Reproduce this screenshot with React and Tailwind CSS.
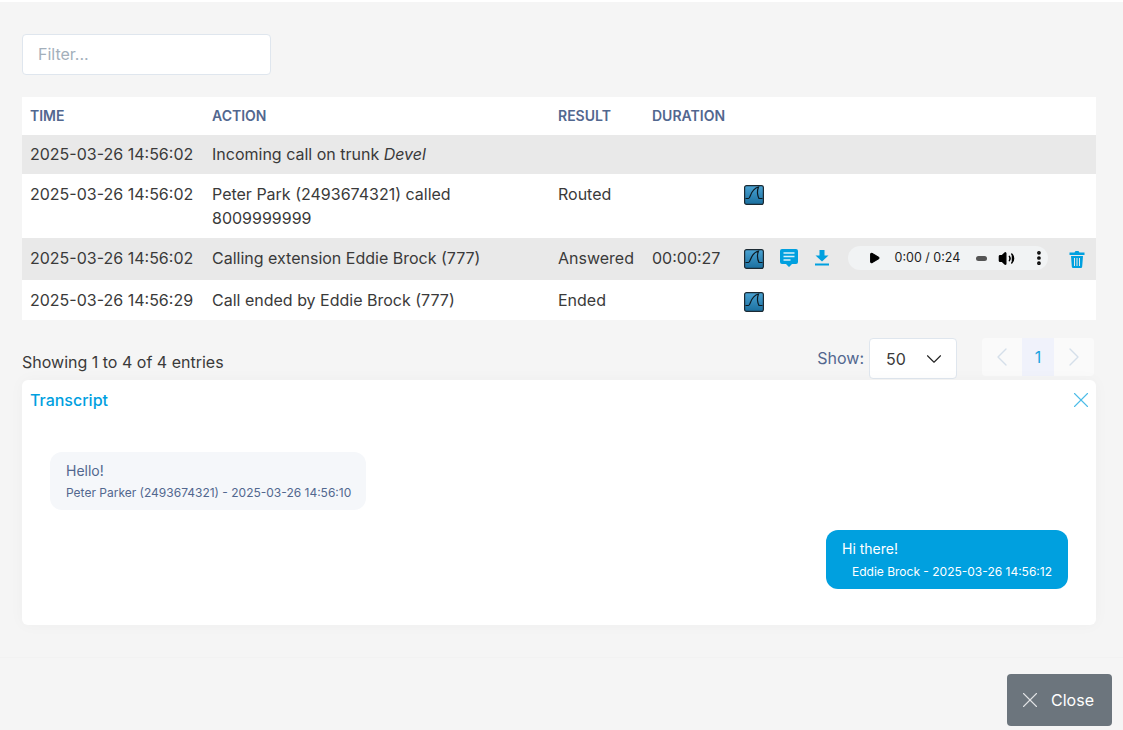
import React from 'react';
import { X, ChevronLeft, ChevronRight, ChevronDown, Play, Volume2, MoreVertical } from 'lucide-react';

const Shark = () => (
  <svg width="20" height="20" viewBox="0 0 20 20" className="block">
    <defs>
      <linearGradient id="sg" x1="0" y1="0" x2="0" y2="1">
        <stop offset="0" stopColor="#4ba3d3" />
        <stop offset="1" stopColor="#1a6f9f" />
      </linearGradient>
    </defs>
    <rect x="0.6" y="0.6" width="18.8" height="18.8" rx="2" fill="url(#sg)" stroke="#1c2a33" strokeWidth="1.200" />
    <path d="M1.500 13.500h3c2.500 0 1.500-9.500 10-11.500 -1.200 3-1.200 8 0.500 11.500h3.500" fill="none" stroke="#0d1a22" strokeWidth="1.200" />
  </svg>
);

const Chat = () => (
  <svg width="18" height="20" viewBox="0 0 18 20" className="block">
    <path d="M2 0h14a2 2 0 0 1 2 2v11a2 2 0 0 1-2 2h-4l-3 3-3-3H2a2 2 0 0 1-2-2V2a2 2 0 0 1 2-2z" fill="#00a0df" />
    <path d="M3.500 4h11M3.500 7.500h11M3.500 11h7" stroke="#d6f0fa" strokeWidth="1.400" />
  </svg>
);

const Download = () => (
  <svg width="16" height="16" viewBox="0 0 16 16" className="block">
    <path d="M5.500 0h5v5.500h4L8 11.500 1.500 5.500h4z" fill="#00a0df" />
    <rect x="1" y="13.500" width="14" height="2" fill="#00a0df" />
  </svg>
);

const Trash = () => (
  <svg width="16" height="18" viewBox="0 0 16 18" className="block">
    <path d="M0.500 2.500h5l1-1.500h3l1 1.500h5V5H0.500z" fill="#00a0df" />
    <path d="M2 6h12l-0.800 10.500a1.500 1.500 0 0 1-1.500 1.500H4.300a1.500 1.500 0 0 1-1.500-1.500z" fill="#00a0df" />
    <path d="M5.500 8v8M8 8v8M10.500 8v8" stroke="#e8e8e8" strokeWidth="1" />
  </svg>
);

const Player = () => (
  <div className="w-[200px] h-6 rounded-full bg-[#f1f3f4] flex items-center text-[12.5px] text-[#1f1f1f]">
    <Play size={14} fill="#000" stroke="#000" className="ml-[20px]" />
    <span className="ml-[14px] whitespace-nowrap">0:00 / 0:24</span>
    <span className="ml-[16px] w-3 h-[5px] rounded-full bg-[#555]" />
    <Volume2 size={19} fill="#000" stroke="#000" className="ml-[11px]" />
    <MoreVertical size={20} stroke="#000" strokeWidth={3} className="ml-[15px]" />
  </div>
);

const Row = ({ time, action, result, duration, gray, h, pt = 'pt-2', children }) => (
  <tr className={`${gray ? 'bg-[#e9e9e9]' : 'bg-white'} ${h}`}>
    <td className={`pl-2 ${pt} align-top`}>{time}</td>
    <td className={`pr-6 ${pt} align-top`}>{action}</td>
    <td className={`${pt} align-top`}>{result}</td>
    <td className={`${pt} align-top`}>{duration}</td>
    <td className="align-top pr-[10px]">{children}</td>
  </tr>
);

export default function App() {
  return (
    <div className="w-[1123px] h-[730px] relative overflow-hidden bg-[#f5f5f5] border-t-2 border-white text-[16px] leading-6 text-[#3a3a3a]" style={{ fontFamily: 'Inter, sans-serif' }}>
      <div className="ml-[22px] w-[1074px] pt-8">
        <input
          placeholder="Filter..."
          className="block w-[249px] h-[41px] pl-[15px] pb-[2px] bg-white border border-[#dfe6ee] rounded text-[16px] placeholder:text-[#a3afbb] outline-none"
        />
        <table className="mt-[22px] w-[1074px] table-fixed border-collapse">
          <colgroup>
            <col className="w-[190px]" />
            <col className="w-[346px]" />
            <col className="w-[94px]" />
            <col className="w-[92px]" />
            <col />
          </colgroup>
          <thead>
            <tr className="bg-white h-[38px] text-left text-[14px] font-semibold text-[#52678f]">
              <th className="pl-2 font-semibold">TIME</th>
              <th className="font-semibold">ACTION</th>
              <th className="font-semibold">RESULT</th>
              <th className="font-semibold">DURATION</th>
              <th />
            </tr>
          </thead>
          <tbody>
            <Row gray h="h-[39px]" pt="pt-[7px]" time="2025-03-26 14:56:02" action={<>Incoming call on trunk <i>Devel</i></>} />
            <Row h="h-16" time="2025-03-26 14:56:02" action="Peter Park (2493674321) called 8009999999" result="Routed">
              <div className="pt-[11px]"><Shark /></div>
            </Row>
            <Row gray h="h-[42px]" time="2025-03-26 14:56:02" action="Calling extension Eddie Brock (777)" result="Answered" duration="00:00:27">
              <div className="flex items-center pt-2">
                <div className="mt-[2px]"><Shark /></div>
                <div className="ml-[16px] mt-[2px]"><Chat /></div>
                <div className="ml-[16px]"><Download /></div>
                <div className="ml-[18px]"><Player /></div>
                <div className="ml-[21px] mt-[1px]"><Trash /></div>
              </div>
            </Row>
            <Row h="h-10" time="2025-03-26 14:56:29" action="Call ended by Eddie Brock (777)" result="Ended">
              <div className="pt-3"><Shark /></div>
            </Row>
          </tbody>
        </table>

        <div className="h-[60px] flex items-start justify-between">
          <span className="mt-[30px] text-[#3a3a3a]">Showing 1 to 4 of 4 entries</span>
          <div className="flex items-start mt-[18px] mr-[2px]">
            <span className="mt-2 text-[#52678f]">Show:</span>
            <div className="ml-[5px] w-[88px] h-[41px] bg-white border border-[#dfe6ee] rounded flex items-center justify-between pl-4 pr-[9px]">
              <span>50</span>
              <ChevronDown size={26} strokeWidth={1} className="text-[#222]" />
            </div>
            <div className="ml-[25px] h-[38px] flex rounded bg-[#fafafa] overflow-hidden">
              <div className="w-10 flex items-center justify-center"><ChevronLeft size={32} strokeWidth={1} className="text-[#d5dfea]" /></div>
              <div className="w-8 flex items-center justify-center bg-[#f0f2fb] text-[#1ba3e0]">1</div>
              <div className="w-10 flex items-center justify-center"><ChevronRight size={32} strokeWidth={1} className="text-[#d5dfea]" /></div>
            </div>
          </div>
        </div>

        <div className="h-[245px] bg-white rounded-md shadow-[0_0_16px_rgba(0,0,0,0.03)] relative px-7 pt-[72px]">
          <div className="absolute left-2 top-2 font-medium text-[#00a0df]">Transcript</div>
          <X size={26} strokeWidth={1} className="absolute right-[2px] top-[7px] text-[#00a0df] opacity-70" />
          <div className="w-[316px] h-[58px] rounded-xl bg-[#f5f7fa] px-4 pt-[10px] text-[#52678f]">
            <div className="text-[14px] leading-[18px]">Hello!</div>
            <div className="text-[12px] leading-[14px] mt-[6px] whitespace-nowrap">Peter Parker (2493674321) - 2025-03-26 14:56:10</div>
          </div>
          <div className="flex justify-end mt-5">
            <div className="w-[242px] h-[59px] rounded-xl bg-[#00a0df] px-4 pt-[10px] text-white">
              <div className="text-[14px] leading-[18px]">Hi there!</div>
              <div className="text-[12px] leading-[14px] mt-[7px] pl-[10px] whitespace-nowrap">Eddie Brock - 2025-03-26 14:56:12</div>
            </div>
          </div>
        </div>
      </div>
      <div className="absolute left-0 right-0 top-[655px] h-px bg-[#f2f2f2]" />
      <button className="absolute left-[1007px] top-[672px] w-[105px] h-[52px] rounded bg-[#6c757d] flex items-center justify-center gap-[12px] text-white">
        <X size={26} strokeWidth={1} className="-mx-[6px] opacity-80 -translate-x-[2px]" />
        <span>Close</span>
      </button>
    </div>
  );
}
